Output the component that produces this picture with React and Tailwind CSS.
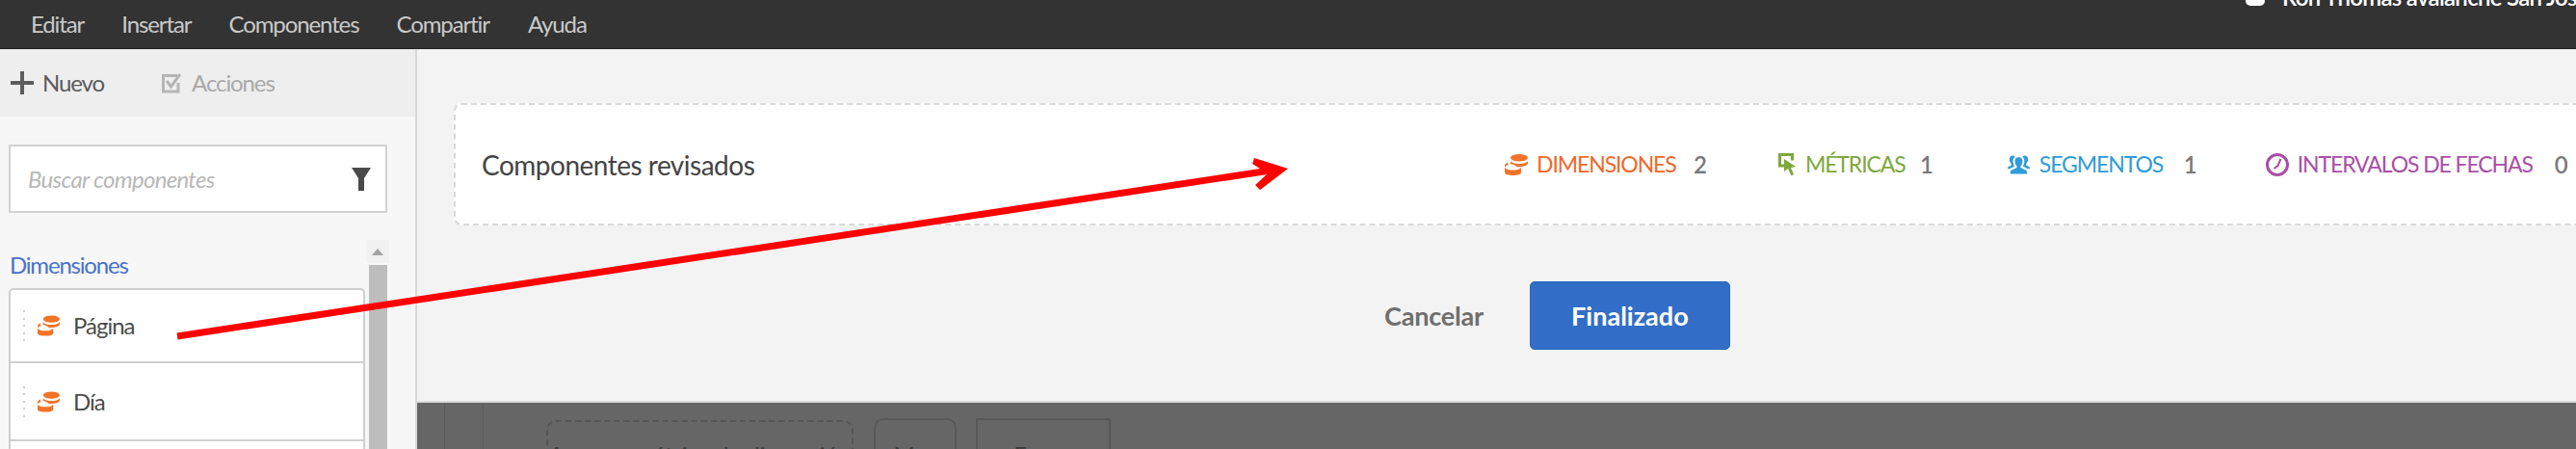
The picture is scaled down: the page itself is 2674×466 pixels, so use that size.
const font = "font-['Lato','Open_Sans',sans-serif]";

function Db({ className }) {
  return (
    <svg viewBox="0 0 24 22" className={className} fill="currentColor">
      <ellipse cx="15" cy="3.800" rx="9" ry="3.800" />
      <path d="M6 7c1.200 2 5 3 9 3s7.800-1 9-3v3c-1 2-5 3.200-9 3.200-1 0-2 0-3-.2-1-1.500-3-2.500-6-2.800z" />
      <path d="M3 8.500C1.500 9.300.3 10.300 0 11.500v2c.6-.9 1.800-1.700 3.500-2.200z" />
      <path d="M0 14c2 1.800 5 2.600 8.500 2.600 3.500 0 6.500-.8 8.500-2.600v5c0 2-3.500 3-8.500 3S0 21 0 19z" />
    </svg>
  );
}

function Row({ label, h }) {
  return (
    <div className={`flex items-center border-b-2 border-[#cfcfcf] ${h}`}>
      <div className="ml-[13px] flex h-[32px] w-[3px] flex-col justify-between">
        {[0, 1, 2, 3, 4].map((i) => (
          <span key={i} className="h-[2px] w-[2px] bg-[#d0d0d0]" />
        ))}
      </div>
      <Db className="ml-[12px] h-[22px] w-[23px] text-[#f37329]" />
      <span className="ml-[14px] text-[24px] leading-none tracking-[-1px] text-[#4b4b4b]">{label}</span>
    </div>
  );
}

function Stat({ icon, label, color, n, ml, gap, labelW, nGap }) {
  return (
    <div className={`flex items-center ${ml}`}>
      {icon}
      <span className={`${gap} ${labelW} whitespace-nowrap text-[23px] leading-none tracking-[-1.1px] ${color}`}>{label}</span>
      <span className={`${nGap} text-[24px] font-semibold leading-none text-[#7a7a7a]`}>{n}</span>
    </div>
  );
}

export default function App() {
  return (
    <div className={`relative flex h-[466px] w-[2674px] flex-col overflow-hidden bg-[#f3f3f3] ${font}`}>
      <header className="relative flex h-[51px] shrink-0 items-center overflow-hidden border-b border-[#222] bg-[#333333] pl-[32px] text-[24px] leading-none tracking-[-1.1px] text-[#c9c9c9]">
        <span>Editar</span>
        <span className="ml-[39px]">Insertar</span>
        <span className="ml-[39px]">Componentes</span>
        <span className="ml-[39px]">Compartir</span>
        <span className="ml-[40px]">Ayuda</span>
        <div className="absolute left-[2331px] top-[-15px] flex items-center whitespace-nowrap text-[24px] font-semibold leading-none tracking-[-0.7px] text-white">
          <span className="h-[18px] w-[20px] rounded-[5px] bg-white" />
          <span className="ml-[18px]">Ron Thomas avalanche San Jose</span>
        </div>
      </header>

      <div className="flex min-h-0 flex-1">
        <aside className="flex w-[433px] shrink-0 flex-col border-r-2 border-[#d9d9d9] bg-[#f7f7f7]">
          <div className="flex h-[70px] shrink-0 items-center bg-[#eeeeee] pl-[11px] text-[24px] leading-none tracking-[-1.1px]">
            <svg viewBox="0 0 24 24" className="h-[24px] w-[24px] text-[#5c5c5c]" fill="currentColor">
              <path d="M10 0h4v10h10v4H14v10h-4V14H0v-4h10z" />
            </svg>
            <span className="ml-[9px] text-[#5a5a5a]">Nuevo</span>
            <svg viewBox="0 0 20 22" className="ml-[60px] h-[22px] w-[20px] text-[#b5b5b5]" fill="none" stroke="currentColor" preserveAspectRatio="none">
              <path strokeWidth="3" d="M17 11v9H1.500V3.500H16" />
              <path strokeWidth="3" d="M5 9l4.500 6L19 2" />
            </svg>
            <span className="ml-[11px] text-[#a9a9a9]">Acciones</span>
          </div>
          <div className="ml-[9px] mt-[29px] flex h-[71px] w-[393px] shrink-0 items-center justify-between border-2 border-[#d2d2d2] bg-white pl-[18px] pr-[15px]">
            <span className="text-[24px] italic leading-none tracking-[-0.7px] text-[#b8b8b8]">Buscar componentes</span>
            <svg viewBox="0 0 20 24" className="h-[24px] w-[20px] text-[#4a4a4a]" fill="currentColor">
              <path d="M0 0h20l-7 11v13h-6V11z" />
            </svg>
          </div>
          <div className="mt-[28px] flex min-h-0 flex-1">
            <div className="ml-[9px] flex w-[370px] shrink-0 flex-col">
              <div className="ml-[1px] h-[50px] text-[24px] leading-[52px] tracking-[-1.2px] text-[#4a72c9]">Dimensiones</div>
              <div className="flex-1 overflow-hidden rounded-t-[5px] border-x-2 border-t-2 border-[#cfcfcf] bg-white">
                <Row label="Página" h="h-[76px]" />
                <Row label="Día" h="h-[81px]" />
              </div>
            </div>
            <div className="ml-[1px] flex w-[24px] flex-col items-center">
              <div className="flex h-[24px] w-[24px] items-center justify-center bg-[#f1f1f1]">
                <span className="h-0 w-0 border-x-[6px] border-b-[7px] border-x-transparent border-b-[#a3a3a3]" />
              </div>
              <div className="mt-[2px] w-[19px] flex-1 bg-[#bdbdbd]" />
            </div>
          </div>
        </aside>

        <main className="flex min-w-0 flex-1 flex-col">
          <div className="flex h-[367px] shrink-0 flex-col border-b-2 border-[#dddddd] bg-[#f3f3f3] pl-[38px]">
            <div className="mt-[56px] flex h-[127px] w-[2240px] shrink-0 items-center rounded-[8px] border-2 border-dashed border-[#d9d9d9] bg-white pl-[27px]">
              <span className="w-[283px] whitespace-nowrap text-[28px] leading-none tracking-[-0.5px] text-[#444444]">Componentes revisados</span>
              <Stat
                ml="ml-[779px]"
                gap="ml-[9px]"
                labelW="w-[145px]"
                nGap="ml-[18px]"
                color="text-[#f0682c]"
                label="DIMENSIONES"
                n="2"
                icon={<Db className="h-[22px] w-[24px] text-[#f37329]" />}
              />
              <Stat
                ml="ml-[74px]"
                gap="ml-[10px]"
                labelW="w-[105px]"
                nGap="ml-[14px]"
                color="text-[#7da83c]"
                label="MÉTRICAS"
                n="1"
                icon={
                  <svg viewBox="0 0 18 24" className="h-[24px] w-[18px]">
                    <path d="M7 13H1.500V1.500h13v6" fill="none" stroke="#7da83c" strokeWidth="3" />
                    <path d="M6 6l12 8-5 1 3 7-2.500 1.500L10 16l-4 3z" fill="#7da83c" />
                  </svg>
                }
              />
              <Stat
                ml="ml-[77px]"
                gap="ml-[10px]"
                labelW="w-[128px]"
                nGap="ml-[22px]"
                color="text-[#2f9bd8]"
                label="SEGMENTOS"
                n="1"
                icon={
                  <svg viewBox="0 0 24 20" className="h-[20px] w-[23px] text-[#2f9bd8]" fill="currentColor">
                    <path d="M12 2c3 0 4.500 2.200 4 5-.3 2-1 3.500-2 4.500V13l6 3c1 .5 1 2 1 4H3c0-2 0-3.500 1-4l6-3v-1.500c-1-1-1.700-2.500-2-4.500C7.500 4.200 9 2 12 2z" />
                    <path d="M5.500 0c1 0 2 .4 2.600 1C6 2.500 5.500 5 6 8c.2 1.500.8 2.600 1.500 3.500L2 14.500H0c0-1 0-2 1-2.500l3-1.500V9C3 8 2.200 6.500 2 5 1.700 2 3 0 5.500 0zM18.500 0c2.500 0 3.800 2 3.500 5-.2 1.500-1 3-2 4v1.500l3 1.500c1 .5 1 1.500 1 2.500h-2l-5.500-3c.7-.9 1.300-2 1.500-3.500.5-3 0-5.500-2.100-7 .6-.6 1.600-1 2.600-1z" />
                  </svg>
                }
              />
              <Stat
                ml="ml-[71px]"
                gap="ml-[9px]"
                labelW="w-[248px]"
                nGap="ml-[19px]"
                color="text-[#a94fa6]"
                label="INTERVALOS DE FECHAS"
                n="0"
                icon={
                  <svg viewBox="0 0 24 24" className="h-[24px] w-[24px]" fill="none" stroke="#a94fa6">
                    <circle cx="12" cy="12" r="10.500" strokeWidth="3" />
                    <path d="M15.500 6l-3 7-4 3" strokeWidth="2" />
                  </svg>
                }
              />
            </div>
            <div className="mt-[58px] flex shrink-0 items-center">
              <span className="ml-[966px] text-[27px] font-bold leading-none tracking-[-0.2px] text-[#6e6e6e]">Cancelar</span>
              <button className="ml-[48px] h-[71px] w-[208px] rounded-[5px] border border-[#2a64bd] bg-[#326ec8] text-[27px] font-bold leading-none text-white">
                Finalizado
              </button>
            </div>
          </div>

          <div className="flex min-h-0 flex-1 items-start overflow-hidden bg-[#666666]">
            <span className="ml-[28px] h-full w-[41px] border-x border-[#5c5c5c]" />
            <div className="ml-[65px] mt-[18px] flex h-[60px] w-[319px] shrink-0 justify-center rounded-[10px] border-2 border-dashed border-[#545454] pt-[22px] text-[24px] leading-none text-[#3a3a3a]">
              Agregar métrica de dimensión
            </div>
            <div className="ml-[21px] mt-[16px] flex h-[60px] w-[86px] shrink-0 justify-center rounded-[10px] border-2 border-[#585858] pt-[24px] text-[24px] leading-none text-[#3a3a3a]">
              Mes
            </div>
            <div className="ml-[20px] mt-[16px] flex h-[60px] w-[140px] shrink-0 justify-center border-2 border-[#585858] pt-[24px] text-[24px] leading-none text-[#3a3a3a]">
              Enero
            </div>
          </div>
        </main>
      </div>

      <svg className="pointer-events-none absolute left-0 top-0" width="2674" height="466" fill="#ff0000">
        <path d="M184 349L1325 176" stroke="#ff0000" strokeWidth="7" />
        <polygon points="1302,164 1337,175 1308,197 1303,192 1316,180 1300,170" />
      </svg>
    </div>
  );
}
